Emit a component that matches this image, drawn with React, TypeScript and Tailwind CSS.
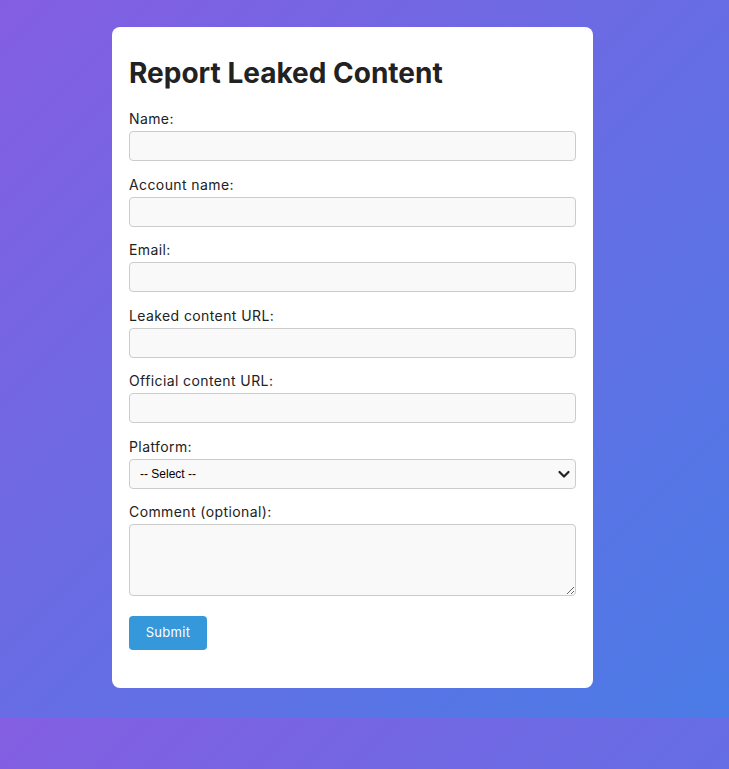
const fields = [
  { id: "name", label: "Name:" },
  { id: "account", label: "Account name:" },
  { id: "email", label: "Email:" },
  { id: "leaked", label: "Leaked content URL:" },
  { id: "official", label: "Official content URL:" },
];

const App = () => {
  return (
    <div className="h-[769px] overflow-hidden bg-[linear-gradient(135deg,#845ee2,#4a7be6)] bg-[length:100%_717px] bg-repeat-y font-['Inter','Noto_Sans',sans-serif] text-[#222]">
      <div className="pt-[27px]">
        <div className="ml-[112px] w-[481px] rounded-[8px] bg-white px-[17px] pt-[28px] pb-[38px]">
          <h2 className="mb-[17px] text-[28px] font-bold leading-[36px] text-[#222]">
            Report Leaked Content
          </h2>
          <form onSubmit={(e) => e.preventDefault()}>
            {fields.map((f) => (
              <div key={f.id} className="mb-[12.5px]">
                <label
                  htmlFor={f.id}
                  className="mb-[2px] block text-[14px] leading-[21px] tracking-[0.4px]"
                >
                  {f.label}
                </label>
                <input
                  id={f.id}
                  type="text"
                  className="block h-[30px] w-full rounded-[4px] border border-[#ccc] bg-[#f9f9f9] px-2 text-[14px] outline-none"
                />
              </div>
            ))}
            <div className="mb-[12.5px]">
              <label
                htmlFor="platform"
                className="mb-[2px] block text-[14px] leading-[21px] tracking-[0.4px]"
              >
                Platform:
              </label>
              <div className="relative">
                <select
                  id="platform"
                  className="block h-[30px] w-full appearance-none rounded-[4px] border border-[#ccc] bg-[#f9f9f9] pl-[10px] font-['Liberation_Sans',sans-serif] text-[12px] text-black outline-none"
                >
                  <option>-- Select --</option>
                </select>
                <svg
                  className="pointer-events-none absolute right-[5px] top-[8px]"
                  width="14"
                  height="14"
                  viewBox="0 0 14 14"
                  fill="none"
                  stroke="#222"
                  strokeWidth="2.2"
                  strokeLinecap="round"
                  strokeLinejoin="round"
                >
                  <path d="M2.5 5 L7 9.5 L11.5 5" />
                </svg>
              </div>
            </div>
            <div className="mb-[20px]">
              <label
                htmlFor="comment"
                className="mb-[2px] block text-[14px] leading-[21px] tracking-[0.4px]"
              >
                Comment (optional):
              </label>
              <textarea
                id="comment"
                className="block h-[72px] w-full rounded-[4px] border border-[#ccc] bg-[#f9f9f9] px-2 text-[14px] outline-none"
              />
            </div>
            <button
              type="submit"
              className="h-[34px] w-[78px] rounded-[4px] bg-[#3498db] text-[13px] tracking-[0.3px] text-white"
            >
              Submit
            </button>
          </form>
        </div>
      </div>
    </div>
  );
};

export default App;
